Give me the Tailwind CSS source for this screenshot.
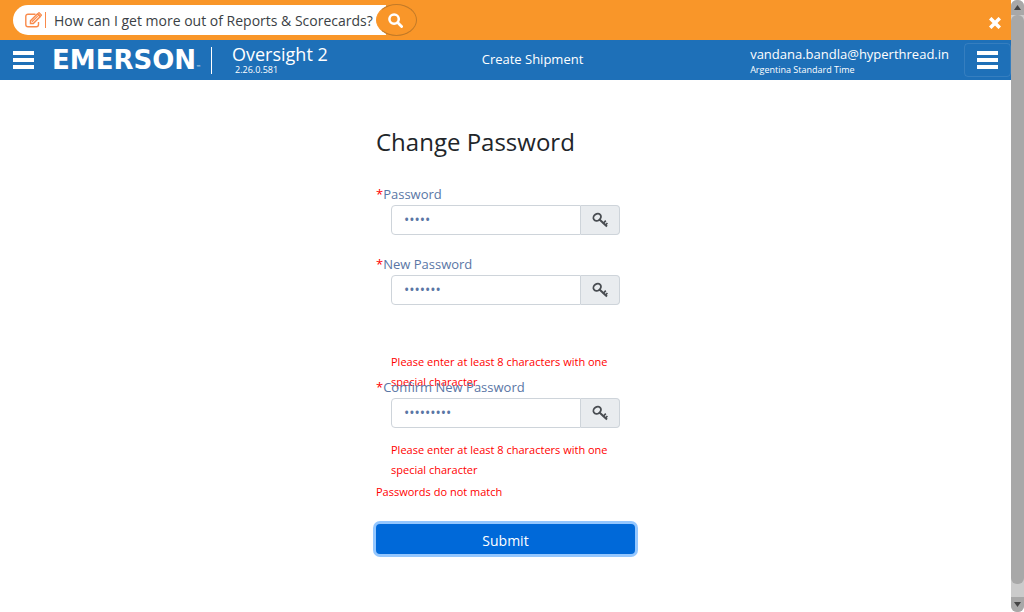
<!DOCTYPE html>
<html lang="en">
<head>
<meta charset="utf-8">
<meta name="viewport" content="width=device-width, initial-scale=1">
<title>Change Password</title>
<script src="https://cdn.jsdelivr.net/npm/@tailwindcss/browser@4"></script>
</head>
<body class="flex h-screen overflow-hidden bg-white font-['Open_Sans',sans-serif] text-[13px] text-[#212529]">
<svg class="hidden" aria-hidden="true">
  <symbol id="key" viewBox="0 0 16 16">
    <g fill="none" stroke="#494d52">
      <ellipse cx="5.200" cy="5.200" rx="4" ry="3.300" stroke-width="1.800" transform="rotate(-35 5.200 5.200)"/>
      <path d="M7.500 7.500L15 14.600" stroke-width="2"/>
      <path d="M11 11.600l2.800-3M13.200 13.400l2.200-2.400" stroke-width="1.600"/>
    </g>
  </symbol>
</svg>
<div class="min-w-0 flex-1">
  <div class="flex h-10 items-center justify-between bg-[#f99629] pr-2.5 pl-[13px]">
    <form class="flex items-center">
      <label for="ask" class="flex h-[30px] items-center rounded-l-full bg-white pl-3">
        <svg class="size-[17px]" viewBox="0 0 17 17" fill="none" stroke="#f98a4b" aria-label="Ask a question">
          <path d="M10.500 2.200H3A2.200 2.200 0 0 0 .8 4.400V12.500A2.200 2.200 0 0 0 3 14.700H11.300A2.200 2.200 0 0 0 13.500 12.500V10" stroke-width="1.400"/>
          <path d="M5.500 8.800L12.300 2l2.800 2.800-6.800 6.800H5.500z" stroke-width="1.500"/>
          <path d="M7 9.700l5.700-5.600M13 1.600l1-1 2.500 2.500-1 1z" stroke-width="1.200"/>
        </svg>
        <span class="ml-[3px] h-4 w-px bg-[#f98a4b]"></span>
      </label>
      <input id="ask" type="text" value="How can I get more out of Reports &amp; Scorecards?" class="h-[30px] w-[340px] bg-white pl-2 text-sm text-[#3b3f45] outline-none">
      <button type="button" aria-label="Search" class="-ml-[10px] flex h-8 w-[41px] items-center justify-center rounded-[50%] border border-[#c27a28] border-l-[#f99629] bg-[#f99629] pr-[3px]">
        <svg class="size-[15px]" viewBox="0 0 16 16" fill="none" stroke="#fff"><circle cx="6.500" cy="6.500" r="5" stroke-width="2.700"/><path d="M10.500 10.500l4 4" stroke-width="3" stroke-linecap="round"/></svg>
      </button>
    </form>
    <button type="button" aria-label="Close" class="mt-1.5"><svg class="size-3" viewBox="0 0 12 12" stroke="#fff" stroke-width="3.600"><path d="M1.200 1.200l9.600 9.600M10.800 1.200L1.200 10.800"/></svg></button>
  </div>
  <header class="grid h-10 grid-cols-[1fr_auto_1fr] items-center bg-[#1e70b8] text-white">
    <div class="flex items-center pl-[13px]">
      <button type="button" aria-label="Open navigation"><svg class="h-[18px] w-[21px]" viewBox="0 0 21 18" fill="#fff"><path d="M0 0h21v4H0zM0 7h21v4H0zM0 14h21v4H0z"/></svg></button>
      <a href="#" class="ml-[18px] flex items-end font-['DejaVu_Sans',sans-serif] text-[26px] leading-7 font-bold">EMERSON<span class="text-[5px] leading-[14px] font-normal">™</span></a>
      <span class="ml-2.5 h-[27px] w-px bg-white"></span>
      <div class="ml-5 pb-0.5">
        <div class="text-lg leading-[22px]">Oversight 2</div>
        <div class="pl-[3px] text-[9px] leading-[10px]">2.26.0.581</div>
      </div>
    </div>
    <a href="#" class="pl-[54px]">Create Shipment</a>
    <div class="flex items-center justify-end">
      <div class="mr-[15px]">
        <div class="pt-1 leading-4">vandana.bandla@hyperthread.in</div>
        <div class="text-[9px] leading-4">Argentina Standard Time</div>
      </div>
      <button type="button" aria-label="Open menu" class="flex h-[34px] w-[47px] items-center justify-center rounded border border-white/10"><svg class="h-[18px] w-[21px]" viewBox="0 0 21 18" fill="#fff"><path d="M0 0h21v4H0zM0 7h21v4H0zM0 14h21v4H0z"/></svg></button>
    </div>
  </header>
  <main class="mx-auto w-[259px] pt-[46px]">
    <h1 class="text-2xl leading-8">Change Password</h1>
    <form class="mt-[26px] text-[#5a76a5]">
      <label for="current" class="mb-px block leading-5"><span class="text-[#f00]">*</span>Password</label>
      <div class="mx-[15px] flex h-[30px]">
        <input id="current" type="password" value="abcde" class="min-w-0 flex-1 rounded-l border border-[#ced4da] px-3 text-sm outline-none">
        <button type="button" aria-label="Show password" class="flex w-[39px] items-center justify-center rounded-r border border-l-0 border-[#ced4da] bg-[#e9ecef]"><svg class="size-4"><use href="#key"/></svg></button>
      </div>
      <label for="new" class="mt-[19px] mb-px block leading-5"><span class="text-[#f00]">*</span>New Password</label>
      <div class="mx-[15px] flex h-[30px]">
        <input id="new" type="password" value="abcdefg" class="min-w-0 flex-1 rounded-l border border-[#ced4da] px-3 text-sm outline-none">
        <button type="button" aria-label="Show new password" class="flex w-[39px] items-center justify-center rounded-r border border-l-0 border-[#ced4da] bg-[#e9ecef]"><svg class="size-4"><use href="#key"/></svg></button>
      </div>
      <div class="h-[72px] px-[15px] pt-[47px] text-[11px] leading-5 text-[#f00]">Please enter at least 8 characters with one special character</div>
      <label for="confirm" class="mb-px block leading-5"><span class="text-[#f00]">*</span>Confirm New Password</label>
      <div class="mx-[15px] flex h-[30px]">
        <input id="confirm" type="password" value="abcdefghi" class="min-w-0 flex-1 rounded-l border border-[#ced4da] px-3 text-sm outline-none">
        <button type="button" aria-label="Show confirmed password" class="flex w-[39px] items-center justify-center rounded-r border border-l-0 border-[#ced4da] bg-[#e9ecef]"><svg class="size-4"><use href="#key"/></svg></button>
      </div>
      <div class="mt-3 px-[15px] text-[11px] leading-5 text-[#f00]">Please enter at least 8 characters with one special character</div>
      <div class="mt-0.5 text-[11px] leading-5 text-[#f00]">Passwords do not match</div>
      <button type="submit" class="mt-[22px] h-[30px] w-full rounded bg-[#0069d9] pt-1 text-sm text-white ring-3 ring-[#94c7ff]">Submit</button>
    </form>
  </main>
</div>
<div class="flex w-[13px] flex-col rounded-md bg-[#cbcbcb]" aria-hidden="true">
  <div class="flex h-[15px] items-center justify-center rounded-t-md bg-[#a8a8a8]"><svg class="h-1.5 w-[7px]" viewBox="0 0 7 6" fill="#444"><path d="M3.500 0L7 5H0z"/></svg></div>
  <div class="flex-1 rounded-md bg-[#a8a8a8]"></div>
  <div class="mt-[13px] flex h-[15px] items-center justify-center rounded-b-md bg-[#a8a8a8]"><svg class="h-1.5 w-[7px]" viewBox="0 0 7 6" fill="#444"><path d="M0 0h7L3.500 5z"/></svg></div>
</div>
</body>
</html>
